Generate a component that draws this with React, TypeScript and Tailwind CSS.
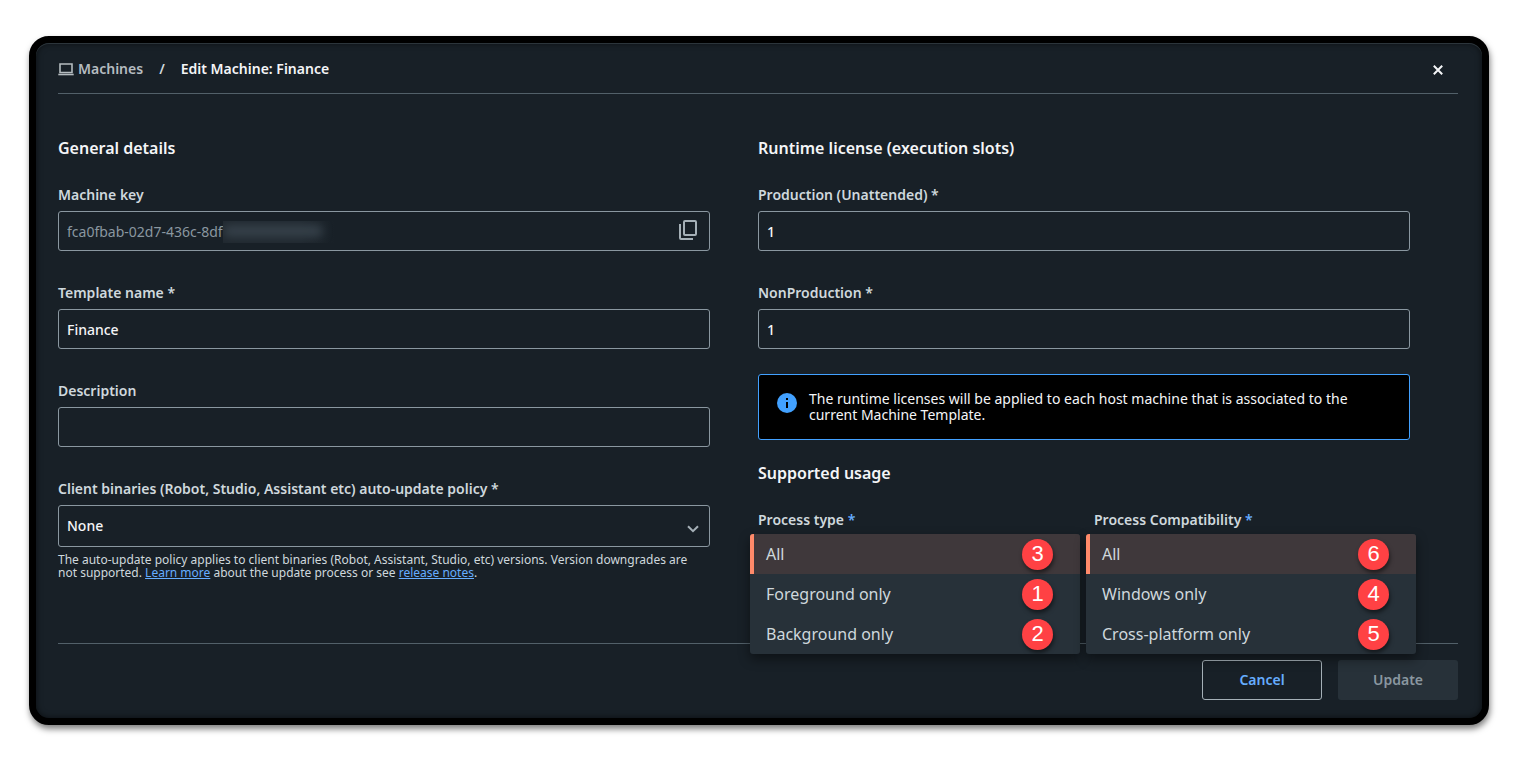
import React, { useState } from "react";

interface FieldProps {
    id: string;
    label: string;
    value: string;
    onChange?: (value: string) => void;
    disabled?: boolean;
    children?: React.ReactNode;
}

interface UsageOption {
    label: string;
    step: number;
}

const processTypes: UsageOption[] = [
    { label: "All", step: 3 },
    { label: "Foreground only", step: 1 },
    { label: "Background only", step: 2 },
];

const compatibilities: UsageOption[] = [
    { label: "All", step: 6 },
    { label: "Windows only", step: 4 },
    { label: "Cross-platform only", step: 5 },
];

function Field({ id, label, value, onChange, disabled, children }: FieldProps) {
    return (
        <div className="flex flex-col gap-1.5">
            <label htmlFor={id} className="text-sm/5 font-semibold text-[#cfd8dd]">{label}</label>
            <div className="relative">
                <input
                    id={id}
                    value={value}
                    readOnly={disabled}
                    onChange={(e) => onChange?.(e.target.value)}
                    className={`block h-10 w-full rounded-[3px] border border-[#8a97a0] bg-transparent px-2 text-sm outline-none ${disabled ? "text-[#8a97a0]" : "font-medium text-[#f4f5f7]"}`}
                />
                {children}
            </div>
        </div>
    );
}

function UsageSelect({ label, options }: { label: string; options: UsageOption[] }) {
    const [selected, setSelected] = useState<string>("All");

    return (
        <div className="relative">
            <span className="block text-sm/5 font-semibold text-[#cfd8dd]">
                {label} <span className="text-[#66adff]">*</span>
            </span>
            <div role="listbox" aria-label={label} className="absolute top-6 -right-1.5 -left-2 z-10 overflow-hidden rounded-[3px] bg-[#273139] shadow-[0_5px_12px_rgba(0,0,0,0.45)]">
                {options.map((option) => (
                    <button
                        key={option.label}
                        type="button"
                        role="option"
                        aria-selected={option.label === selected}
                        onClick={() => setSelected(option.label)}
                        className={`flex h-10 w-full items-center justify-between border-l-4 pr-[27px] pl-3 text-left text-base text-[#cfd8dd] ${option.label === selected ? "border-[#ff8a6a] bg-[#3f383b]" : "border-transparent"}`}
                    >
                        {option.label}
                        <span className="flex size-[31px] items-center justify-center rounded-full bg-[#ff4144] font-['Liberation_Sans',sans-serif] text-[22px] leading-none text-white shadow-[1px_3px_4px_rgba(0,0,0,0.5)]">
                            {option.step}
                        </span>
                    </button>
                ))}
            </div>
        </div>
    );
}

export default function App() {
    const [name, setName] = useState<string>("Finance");
    const [description, setDescription] = useState<string>("");
    const [production, setProduction] = useState<string>("1");
    const [nonProduction, setNonProduction] = useState<string>("1");

    return (
        <div className="min-h-screen bg-white pt-9 pr-[38px] pb-10 pl-[29px] font-['Noto_Sans',sans-serif]">
            <div className="rounded-[20px] border-[7px] border-black bg-black shadow-[1px_4px_6px_rgba(0,0,0,0.5)]">
                <form onSubmit={(e) => e.preventDefault()} className="rounded-[13px] bg-[#182027] pr-6 pb-[18px] pl-[22px] shadow-[inset_0_1px_0_#2c353b,inset_0_0_6px_rgba(0,0,0,0.6)]">
                    <header className="flex h-[51px] items-center justify-between border-b border-[#526069] pt-0.5 text-sm/5 font-semibold">
                        <nav className="flex items-center">
                            <a href="#machines" className="flex items-center gap-1 text-[#b5bcc0]">
                                <svg width="16" height="16" viewBox="0 0 16 16" fill="none" className="mt-0.5">
                                    <path d="M2 2h12v8.5H2z" stroke="currentColor" strokeWidth="1.6" />
                                    <path d="M0.3 12.5h15.4" stroke="currentColor" strokeWidth="1.6" />
                                </svg>
                                Machines
                            </a>
                            <span className="px-4 text-[#cfd8dd]">/</span>
                            <h1 className="text-[#f4f5f7]">Edit Machine: Finance</h1>
                        </nav>
                        <button type="button" aria-label="Close" className="mr-2 flex size-6 items-center justify-center pt-0.5 text-[#f4f5f7]">
                            <svg width="10" height="10" viewBox="0 0 10 10" fill="none">
                                <path d="M0.8 0.8 9.2 9.2M9.2 0.8 0.8 9.2" stroke="currentColor" strokeWidth="2" />
                            </svg>
                        </button>
                    </header>

                    <div className="grid grid-cols-2 pt-[42px] pb-16">
                        <section className="pr-12">
                            <h2 className="text-base/6 font-semibold text-[#f4f5f7]">General details</h2>
                            <div className="flex flex-col gap-8 pt-[25px]">
                                <Field id="machine-key" label="Machine key" value="fca0fbab-02d7-436c-8df" disabled>
                                    <span className="absolute top-2.5 left-[165px] h-[22px] w-28 overflow-hidden bg-linear-to-r from-[#20282f] from-70% to-transparent">
                                        <span className="mt-1 block h-3 w-[100px] rounded-full bg-[#36414a] blur-[5px]"></span>
                                    </span>
                                    <button type="button" aria-label="Copy machine key" className="absolute top-1.5 right-2.5 flex size-6 items-center justify-center text-[#a5b0b7]">
                                        <svg width="20" height="22" viewBox="0 0 20 22" fill="none" stroke="currentColor" strokeWidth="2">
                                            <rect x="6" y="3" width="12" height="14" rx="1" />
                                            <path d="M2 6v14a1 1 0 0 0 1 1h12" />
                                        </svg>
                                    </button>
                                </Field>
                                <Field id="template-name" label="Template name *" value={name} onChange={setName} />
                                <Field id="description" label="Description" value={description} onChange={setDescription} />
                                <div className="flex flex-col gap-1.5">
                                    <label htmlFor="policy" className="text-sm/5 font-semibold text-[#cfd8dd]">
                                        Client binaries (Robot, Studio, Assistant etc) auto-update policy *
                                    </label>
                                    <div className="relative">
                                        <select id="policy" className="block h-[42px] w-full appearance-none rounded-[3px] border border-[#8a97a0] bg-[#182027] px-2 text-sm font-medium text-[#f4f5f7] outline-none">
                                            <option>None</option>
                                        </select>
                                        <svg width="12" height="8" viewBox="0 0 12 8" fill="none" className="pointer-events-none absolute top-5 right-[11px] text-[#a5b0b7]">
                                            <path d="M1 1.2 6 6.2 11 1.2" stroke="currentColor" strokeWidth="2" />
                                        </svg>
                                    </div>
                                    <p className="pr-3 text-xs leading-[13px] text-[#cfd8dd]">
                                        The auto-update policy applies to client binaries (Robot, Assistant, Studio, etc) versions. Version downgrades are not supported. <a href="#learn-more" className="text-[#66adff] underline">Learn more</a> about the update process or see <a href="#release-notes" className="text-[#66adff] underline">release notes</a>.
                                    </p>
                                </div>
                            </div>
                        </section>

                        <section className="pr-12">
                            <h2 className="text-base/6 font-semibold text-[#f4f5f7]">Runtime license (execution slots)</h2>
                            <div className="flex flex-col gap-8 pt-[25px]">
                                <Field id="production" label="Production (Unattended) *" value={production} onChange={setProduction} />
                                <Field id="non-production" label="NonProduction *" value={nonProduction} onChange={setNonProduction} />
                            </div>
                            <div className="mt-[25px] flex gap-3 rounded-[3px] border border-[#42a1ff] bg-black px-[18px] py-4 text-sm/4 text-[#f4f5f7]">
                                <svg width="20" height="20" viewBox="0 0 20 20" className="mt-0.5 shrink-0">
                                    <circle cx="10" cy="10" r="10" fill="#42a1ff" />
                                    <path d="M9 5h2v2H9zM9 9h2v6H9z" fill="#000" />
                                </svg>
                                <p>The runtime licenses will be applied to each host machine that is associated to the current Machine Template.</p>
                            </div>
                            <h2 className="pt-[21px] text-base/6 font-semibold text-[#f4f5f7]">Supported usage</h2>
                            <div className="grid grid-cols-2 gap-5 pt-[25px]">
                                <UsageSelect label="Process type" options={processTypes} />
                                <UsageSelect label="Process Compatibility" options={compatibilities} />
                            </div>
                        </section>
                    </div>

                    <footer className="flex justify-end gap-4 border-t border-[#526069] pt-4 text-sm font-semibold">
                        <button type="button" className="h-10 w-[120px] rounded-[3px] border border-[#a5b0b7] text-[#66adff]">Cancel</button>
                        <button type="submit" className="h-10 w-[120px] rounded-[3px] bg-[#273139] text-[#8a97a0]">Update</button>
                    </footer>
                </form>
            </div>
        </div>
    );
}
